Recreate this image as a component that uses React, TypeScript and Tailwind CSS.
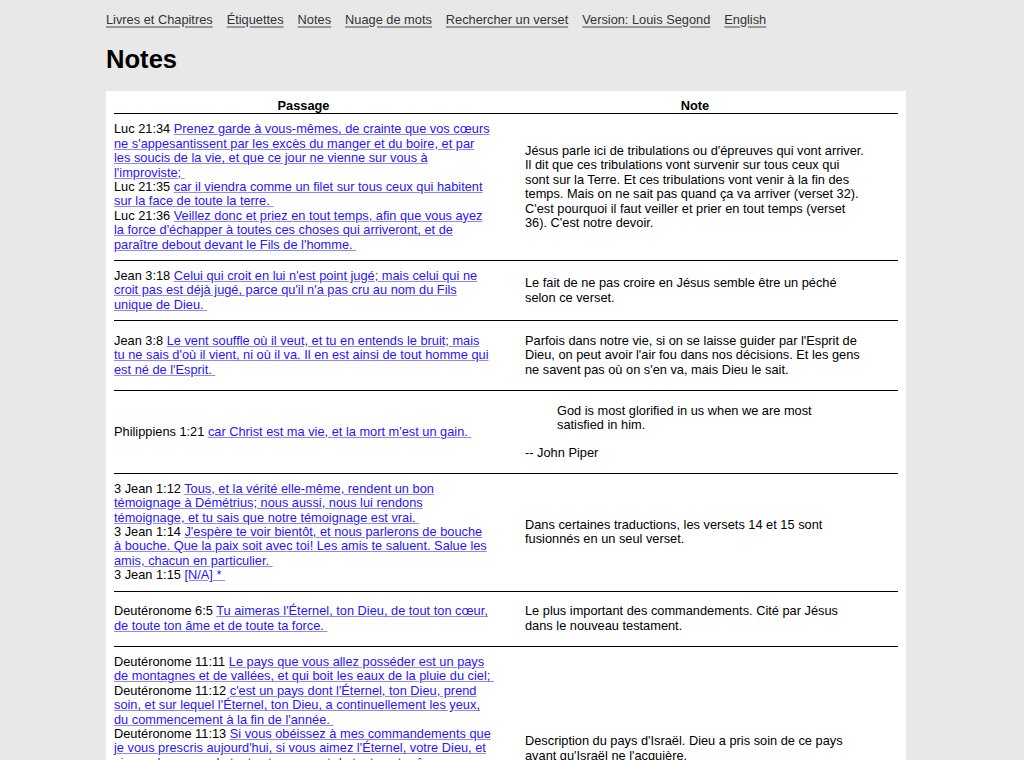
import React from "react";

type Verse = { ref: string; text: string };
type Row = { verses: Verse[]; note: React.ReactNode };

const navLinks = [
  "Livres et Chapitres",
  "Étiquettes",
  "Notes",
  "Nuage de mots",
  "Rechercher un verset",
  "Version: Louis Segond",
  "English",
];

const rows: Row[] = [
  {
    verses: [
      {
        ref: "Luc 21:34",
        text: "Prenez garde à vous-mêmes, de crainte que vos cœurs ne s'appesantissent par les excès du manger et du boire, et par les soucis de la vie, et que ce jour ne vienne sur vous à l'improviste;",
      },
      {
        ref: "Luc 21:35",
        text: "car il viendra comme un filet sur tous ceux qui habitent sur la face de toute la terre.",
      },
      {
        ref: "Luc 21:36",
        text: "Veillez donc et priez en tout temps, afin que vous ayez la force d'échapper à toutes ces choses qui arriveront, et de paraître debout devant le Fils de l'homme.",
      },
    ],
    note: (
      <p className="my-[12.8px]">
        Jésus parle ici de tribulations ou d'épreuves qui vont arriver. Il dit que ces tribulations vont survenir
        sur tous ceux qui sont sur la Terre. Et ces tribulations vont venir à la fin des temps. Mais on ne sait pas
        quand ça va arriver (verset 32). C'est pourquoi il faut veiller et prier en tout temps (verset 36). C'est
        notre devoir.
      </p>
    ),
  },
  {
    verses: [
      {
        ref: "Jean 3:18",
        text: "Celui qui croit en lui n'est point jugé; mais celui qui ne croit pas est déjà jugé, parce qu'il n'a pas cru au nom du Fils unique de Dieu.",
      },
    ],
    note: <p className="my-[12.8px]">Le fait de ne pas croire en Jésus semble être un péché selon ce verset.</p>,
  },
  {
    verses: [
      {
        ref: "Jean 3:8",
        text: "Le vent souffle où il veut, et tu en entends le bruit; mais tu ne sais d'où il vient, ni où il va. Il en est ainsi de tout homme qui est né de l'Esprit.",
      },
    ],
    note: (
      <p className="my-[12.8px]">
        Parfois dans notre vie, si on se laisse guider par l'Esprit de Dieu, on peut avoir l'air fou dans nos
        décisions. Et les gens ne savent pas où on s'en va, mais Dieu le sait.
      </p>
    ),
  },
  {
    verses: [{ ref: "Philippiens 1:21", text: "car Christ est ma vie, et la mort m'est un gain." }],
    note: (
      <>
        <blockquote className="mx-8 my-[12.8px]">
          God is most glorified in us when we are most satisfied in him.
        </blockquote>
        <p className="my-[12.8px]">-- John Piper</p>
      </>
    ),
  },
  {
    verses: [
      {
        ref: "3 Jean 1:12",
        text: "Tous, et la vérité elle-même, rendent un bon témoignage à Démétrius; nous aussi, nous lui rendons témoignage, et tu sais que notre témoignage est vrai.",
      },
      {
        ref: "3 Jean 1:14",
        text: "J'espère te voir bientôt, et nous parlerons de bouche à bouche. Que la paix soit avec toi! Les amis te saluent. Salue les amis, chacun en particulier.",
      },
      { ref: "3 Jean 1:15", text: "[N/A] *" },
    ],
    note: (
      <p className="my-[12.8px]">
        Dans certaines traductions, les versets 14 et 15 sont fusionnés en un seul verset.
      </p>
    ),
  },
  {
    verses: [
      {
        ref: "Deutéronome 6:5",
        text: "Tu aimeras l'Éternel, ton Dieu, de tout ton cœur, de toute ton âme et de toute ta force.",
      },
    ],
    note: (
      <p className="my-[12.8px]">
        Le plus important des commandements. Cité par Jésus dans le nouveau testament.
      </p>
    ),
  },
  {
    verses: [
      {
        ref: "Deutéronome 11:11",
        text: "Le pays que vous allez posséder est un pays de montagnes et de vallées, et qui boit les eaux de la pluie du ciel;",
      },
      {
        ref: "Deutéronome 11:12",
        text: "c'est un pays dont l'Éternel, ton Dieu, prend soin, et sur lequel l'Éternel, ton Dieu, a continuellement les yeux, du commencement à la fin de l'année.",
      },
      {
        ref: "Deutéronome 11:13",
        text: "Si vous obéissez à mes commandements que je vous prescris aujourd'hui, si vous aimez l'Éternel, votre Dieu, et si vous le servez de tout votre cœur et de toute votre âme,",
      },
      {
        ref: "Deutéronome 11:14",
        text: "je donnerai à votre pays la pluie en son temps, la pluie de la première et de l'arrière-saison, et tu recueilleras ton blé, ton moût et ton huile;",
      },
      {
        ref: "Deutéronome 11:15",
        text: "je mettrai aussi dans tes champs de l'herbe pour ton bétail, et tu mangeras et te rassasieras.",
      },
    ],
    note: (
      <p className="my-[12.8px]">
        Description du pays d'Israël. Dieu a pris soin de ce pays avant qu'Israël ne l'acquière.
      </p>
    ),
  },
];

export default function App() {
  return (
    <div className="min-h-screen bg-[#e8e8e8] font-['Liberation_Sans',Arial,sans-serif] text-[12.8px] leading-[14.4px] text-black">
      <div className="ml-[106px] w-[800px] pt-[13px]">
        <nav className="flex gap-[14px]">
          {navLinks.map((label) => (
            <a
              key={label}
              href="#"
              className="text-[#333] underline decoration-[#999] decoration-2 underline-offset-2"
            >
              {label}
            </a>
          ))}
        </nav>

        <h1 className="mt-[16.6px] text-[25.6px] font-bold leading-[30px]">Notes</h1>

        <div className="mt-[17px] bg-white p-2 pb-10">
          <table className="w-[784px] table-fixed border-collapse">
            <colgroup>
              <col className="w-[378px]" />
              <col className="w-[406px]" />
            </colgroup>
            <thead>
              <tr className="border-b border-black">
                <th className="p-0 pl-px text-center font-bold">Passage</th>
                <th className="p-0 text-center font-bold">Note</th>
              </tr>
            </thead>
            <tbody>
              {rows.map((row, ri) => (
                <tr key={ri} className="border-b border-black">
                  <td className="px-0 py-2 align-middle">
                    {row.verses.map((v, vi) => (
                      <div key={vi}>
                        {v.ref}{" "}
                        <a href="#" className="text-[#2a14ff] underline decoration-[#8f87ff]">
                          {v.text}
                          <span className="inline-block w-0 underline decoration-[#8f87ff]">{"\u00a0"}</span>
                        </a>
                      </div>
                    ))}
                  </td>
                  <td className="py-0 pl-[33px] pr-8 align-middle">{row.note}</td>
                </tr>
              ))}
            </tbody>
          </table>
        </div>
      </div>
    </div>
  );
}
